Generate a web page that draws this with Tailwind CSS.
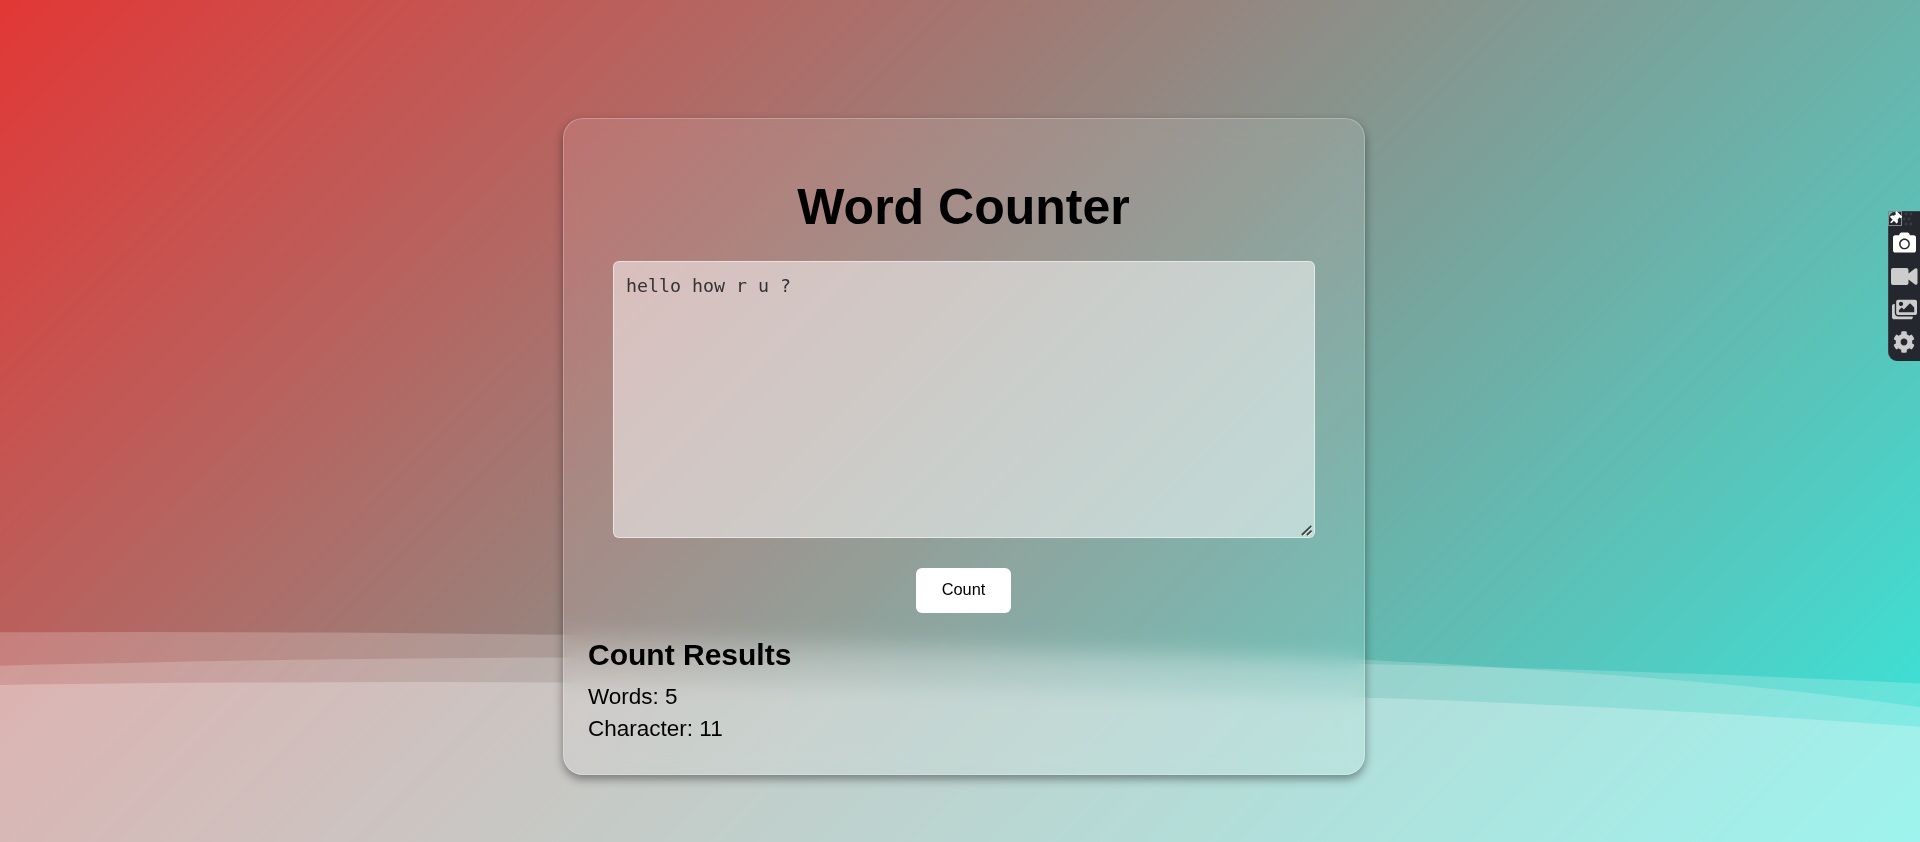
<!DOCTYPE html>
<html lang="en">
<head>
<meta charset="utf-8">
<title>Word Counter</title>
<script src="https://cdn.jsdelivr.net/npm/@tailwindcss/browser@4"></script>
</head>
<body class="relative h-screen overflow-hidden bg-[linear-gradient(135deg,#ff1919_-328px,#30eee2_2015px)] font-['Liberation_Sans',Arial,sans-serif] text-black">
  <!-- Waves -->
  <div class="absolute inset-0 overflow-hidden">
    <div class="absolute left-[-1782px] top-[632px] h-[240px] w-[3840px] rounded-t-[1920px_120px] bg-white/20"></div>
    <div class="absolute left-[-1205px] top-[657px] h-[240px] w-[3840px] rounded-t-[1920px_120px] bg-white/20"></div>
    <div class="absolute left-[-1499px] top-[682px] h-[240px] w-[3840px] rounded-t-[1920px_120px] bg-white/25"></div>
  </div>

  <main class="relative ml-[563px] flex h-full w-[802px] flex-col pt-[118px]">
    <section class="flex h-[657px] flex-col rounded-[20px] border border-white/25 bg-white/10 pl-6 pr-[25px] shadow-[0_4px_10px_rgba(0,0,0,0.4)] backdrop-blur-[10px]">
      <h1 class="mt-[60px] text-center text-[50px] font-bold leading-[57px]">Word Counter</h1>
      <div class="relative ml-[25px] mt-[25px] h-[277px] w-[702px] shrink-0">
        <textarea class="block h-full w-full resize-none rounded-md border border-white/50 bg-white/50 px-3 py-3 font-['DejaVu_Sans_Mono',monospace] text-[18.27px] leading-6 text-[#333] outline-none">hello how r u ?</textarea>
        <svg class="absolute bottom-[2px] right-[3px] h-[11px] w-[11px]" viewBox="0 0 11 11" fill="none">
          <path d="M1.5 11 L11 1.5 M7 11 L11 7" stroke="#fff" stroke-opacity=".6" stroke-width="1.2"/>
          <path d="M.8 10 L10.3 .8 M5.8 10 L10.6 5.6" stroke="#3a4744" stroke-width="1.8"/>
        </svg>
      </div>
      <button class="ml-[328px] mt-[30px] h-[45px] w-[95px] shrink-0 rounded-md bg-white pb-[2px] text-[16.4px] leading-none">Count</button>
      <h2 class="mt-[25px] text-[30px] font-bold leading-[34px]">Count Results</h2>
      <p class="mt-[9px] text-[22.5px] leading-8">Words: 5</p>
      <p class="text-[22.5px] leading-8">Character: 11</p>
    </section>
  </main>

  <!-- Capture toolbar docked to the right edge -->
  <aside class="absolute right-0 top-[211px] flex h-[150px] w-8 flex-col rounded-l-[9px] border-l border-t border-[#3b3e44] bg-[#24272e] text-[#ccc]">
    <div class="flex h-[14px] w-full shrink-0">
      <div class="-ml-px -mt-px flex h-[15px] w-[14px] shrink-0 items-center justify-center border border-[#888]">
        <svg class="h-[13px] w-[10px] shrink-0 rotate-45 text-white" viewBox="0 0 384 512" fill="currentColor"><path d="M298.028 214.267L285.793 96H328c13.255 0 24-10.745 24-24V24c0-13.255-10.745-24-24-24H56C42.745 0 32 10.745 32 24v48c0 13.255 10.745 24 24 24h42.207L85.972 214.267C37.465 236.82 0 277.261 0 328c0 13.255 10.745 24 24 24h136v104.007c0 1.242.289 2.467.845 3.578l24 48c2.941 5.882 11.364 5.893 14.311 0l24-48a8.008 8.008 0 0 0 .845-3.578V352h136c13.255 0 24-10.745 24-24 0-51.183-37.983-91.42-85.972-113.733z"/></svg>
      </div>
      <svg class="h-[14px] w-[14px] shrink-0" viewBox="0 0 14 14" fill="#3a3d43"><circle cx="4" cy="2" r="1.4"/><circle cx="9" cy="2" r="1.4"/><circle cx="2" cy="7" r="1.4"/><circle cx="7" cy="7" r="1.4"/><circle cx="4" cy="12" r="1.4"/><circle cx="9" cy="12" r="1.4"/></svg>
    </div>
    <svg class="ml-1 mt-[5px] h-[23px] w-[23px] shrink-0 text-white" viewBox="0 0 512 512" fill="currentColor"><path d="M512 144v288c0 26.5-21.5 48-48 48H48c-26.5 0-48-21.5-48-48V144c0-26.5 21.5-48 48-48h88l12.3-32.9c7-18.7 24.9-31.1 44.9-31.1h125.5c20 0 37.9 12.4 44.9 31.1L376 96h88c26.5 0 48 21.5 48 48zM376 288c0-66.2-53.8-120-120-120s-120 53.8-120 120 53.8 120 120 120 120-53.8 120-120zm-32 0c0 48.5-39.5 88-88 88s-88-39.5-88-88 39.5-88 88-88 88 39.5 88 88z"/></svg>
    <svg class="ml-[2px] mt-[14px] h-[17px] w-[27px] shrink-0" viewBox="0 0 27 17" fill="currentColor"><path d="M2 0H15.500Q17.500 0 17.500 2V5.500L24 .6Q26.500-.6 26.500 2V15Q26.500 17.600 24 16.400L17.500 11.500V15Q17.500 17 15.500 17H2Q0 17 0 15V2Q0 0 2 0Z"/></svg>
    <svg class="ml-[3px] mt-[13px] h-[23px] w-[25px] shrink-0" viewBox="0 0 576 512" fill="currentColor"><path d="M480 416v16c0 26.51-21.49 48-48 48H48c-26.51 0-48-21.49-48-48V176c0-26.51 21.49-48 48-48h16v208c0 44.112 35.888 80 80 80h336zm96-80V80c0-26.51-21.49-48-48-48H144c-26.51 0-48 21.49-48 48v256c0 26.51 21.49 48 48 48h384c26.51 0 48-21.49 48-48zM256 128c0 26.51-21.49 48-48 48s-48-21.49-48-48 21.49-48 48-48 48 21.49 48 48zm-96 144l55.515-55.515c4.686-4.686 12.284-4.686 16.971 0L272 256l135.515-135.515c4.686-4.686 12.284-4.686 16.971 0L512 208v112H160v-48z"/></svg>
    <svg class="ml-1 mt-[10px] h-[22px] w-[22px] shrink-0" viewBox="0 0 512 512" fill="currentColor"><path d="M487.4 315.7l-42.6-24.6c4.3-23.2 4.3-47 0-70.2l42.6-24.6c4.9-2.8 7.1-8.6 5.5-14-11.1-35.6-30-67.8-54.7-94.6-3.8-4.1-10-5.1-14.8-2.3L380.8 110c-17.9-15.4-38.5-27.3-60.8-35.1V25.8c0-5.6-3.9-10.5-9.4-11.7-36.7-8.2-74.3-7.8-109.2 0-5.5 1.2-9.4 6.1-9.4 11.7V75c-22.2 7.9-42.8 19.8-60.8 35.1L88.7 85.5c-4.9-2.8-11-1.9-14.8 2.3-24.7 26.7-43.6 58.9-54.7 94.6-1.7 5.4.6 11.2 5.5 14L67.3 221c-4.3 23.2-4.3 47 0 70.2l-42.6 24.6c-4.9 2.8-7.1 8.6-5.5 14 11.1 35.6 30 67.8 54.7 94.6 3.8 4.1 10 5.1 14.8 2.3l42.6-24.6c17.9 15.4 38.5 27.3 60.8 35.1v49.2c0 5.6 3.9 10.5 9.4 11.7 36.7 8.2 74.3 7.8 109.2 0 5.5-1.2 9.4-6.1 9.4-11.7v-49.2c22.2-7.9 42.8-19.8 60.8-35.1l42.6 24.6c4.9 2.8 11 1.9 14.8-2.3 24.7-26.7 43.6-58.9 54.7-94.6 1.5-5.5-.7-11.3-5.6-14.1zM256 336c-44.1 0-80-35.9-80-80s35.9-80 80-80 80 35.9 80 80-35.9 80-80 80z"/></svg>
  </aside>
</body>
</html>
